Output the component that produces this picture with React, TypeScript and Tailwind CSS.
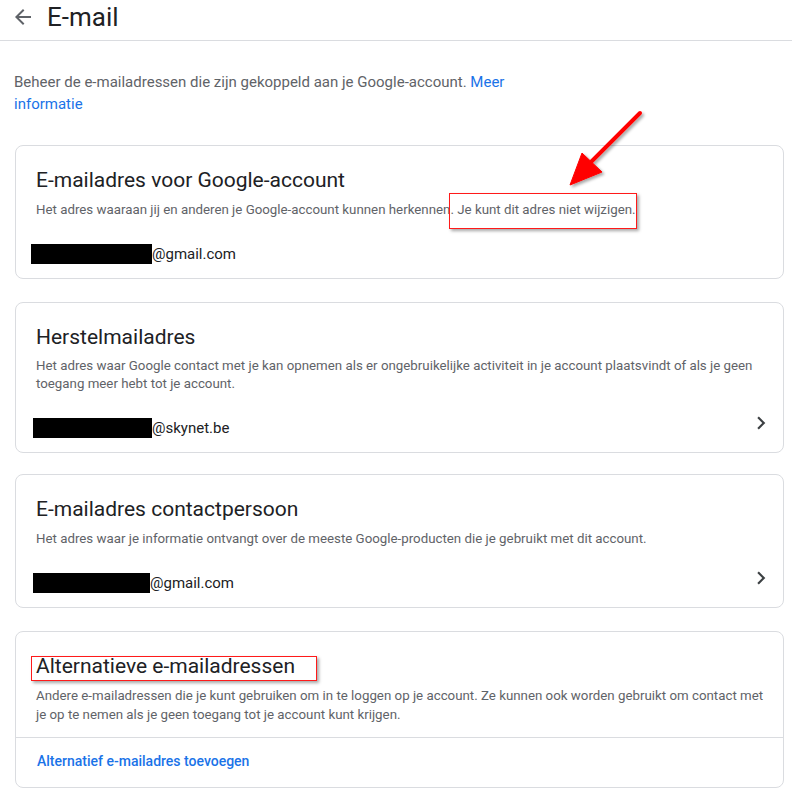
import React from 'react';

// E-mail instellingen (Google-account) met rode markeringen

const FONT = { fontFamily: 'Roboto, "Liberation Sans", Arial, sans-serif' };

function ArrowBack() {
  return (
    <svg width="24" height="24" viewBox="0 0 24 24" className="shrink-0 fill-[#5f6368]">
      <path d="M20 11H7.83l5.59-5.59L12 4l-8 8 8 8 1.41-1.41L7.83 13H20v-2z" />
    </svg>
  );
}

function Chevron() {
  return (
    <svg width="26" height="26" viewBox="0 0 24 24" className="mb-[10px] shrink-0 fill-[#3c4043]">
      <path d="M10 6L8.59 7.41 13.17 12l-4.58 4.59L10 18l6-6z" />
    </svg>
  );
}

/** Zwart blok over het verborgen deel van het adres */
function Redacted({ width, offset }: { width: string; offset: string }) {
  return <span className={`inline-block h-[20px] bg-black ${width} ${offset}`} />;
}

interface CardProps {
  title: string;
  children: React.ReactNode;
  email?: React.ReactNode;
  chevron?: boolean;
  className?: string;
  descLeading?: string;
}

function Card({ title, children, email, chevron, className = '', descLeading = 'leading-[19px]' }: CardProps) {
  return (
    <div className={`rounded-lg border border-[#dadce0] bg-white pl-[20px] pr-[9px] pt-[20px] pb-[12px] ${className}`}>
      <h2 className="text-[21px] leading-[28px] text-[#202124]">{title}</h2>
      <p className={`mt-[6px] pr-[10px] text-[13.3px] text-[#5f6368] ${descLeading}`}>{children}</p>
      {email && (
        <div className="mt-[23px] flex h-[24px] items-center justify-between">
          <div className="flex items-center text-[15px] leading-[24px] text-[#202124]">{email}</div>
          {chevron && <Chevron />}
        </div>
      )}
    </div>
  );
}

export default function App() {
  return (
    <div className="relative min-h-[800px] w-[792px] overflow-hidden bg-white" style={FONT}>
      {/* KOP */}
      <div className="flex h-[41px] items-start border-b border-[#dadce0] pl-[11px]">
        <div className="mt-[1px] flex h-[32px] items-center gap-[12px]">
          <ArrowBack />
          <h1 className="text-[26px] leading-[32px] text-[#202124]">E-mail</h1>
        </div>
      </div>

      <div className="pl-[15px] pr-[8px]">
        <p className="-ml-[1px] mt-[30px] max-w-[520px] text-[15px] leading-[22px] text-[#5f6368]">
          Beheer de e-mailadressen die zijn gekoppeld aan je Google-account.{' '}
          <span className="text-[#1a73e8]">Meer</span>{' '}
          <span className="text-[#1a73e8]">informatie</span>
        </p>

        <div className="mt-[30px] flex flex-col">
          <Card
            title="E-mailadres voor Google-account"
            email={
              <>
                <Redacted width="w-[121px]" offset="-ml-[5px]" />
                <span>@gmail.com</span>
              </>
            }
          >
            Het adres waaraan jij en anderen je Google-account kunnen herkennen. Je kunt dit adres niet wijzigen.
          </Card>

          <Card
            title="Herstelmailadres"
            chevron
            className="mt-[23px]"
            descLeading="leading-[18px]"
            email={
              <>
                <Redacted width="w-[119px]" offset="-ml-[3px]" />
                <span>@skynet.be</span>
              </>
            }
          >
            Het adres waar Google contact met je kan opnemen als er ongebruikelijke activiteit in je account plaatsvindt of als je geen toegang meer hebt tot je account.
          </Card>

          <Card
            title="E-mailadres contactpersoon"
            chevron
            className="mt-[21px]"
            email={
              <>
                <Redacted width="w-[117px]" offset="-ml-[3px]" />
                <span>@gmail.com</span>
              </>
            }
          >
            Het adres waar je informatie ontvangt over de meeste Google-producten die je gebruikt met dit account.
          </Card>

          {/* Alternatieve adressen met scheidingslijn */}
          <div className="mt-[23px] rounded-lg border border-[#dadce0] bg-white">
            <div className="pl-[20px] pr-[8px] pt-[20px] pb-[13px]">
              <h2 className="text-[21px] leading-[28px] text-[#202124]">Alternatieve e-mailadressen</h2>
              <p className="mt-[6px] text-[13.3px] leading-[19px] text-[#5f6368]">
                Andere e-mailadressen die je kunt gebruiken om in te loggen op je account. Ze kunnen ook worden gebruikt om contact met je op te nemen als je geen toegang tot je account kunt krijgen.
              </p>
            </div>
            <div className="border-t border-[#dadce0] pl-[21px] pt-[11px] pb-[14px]">
              <span className="text-[14px] font-medium leading-[19px] text-[#1a73e8]">
                Alternatief e-mailadres toevoegen
              </span>
            </div>
          </div>
        </div>
      </div>

      {/* RODE MARKERINGEN (screenshot-annotaties) */}
      <div className="pointer-events-none absolute left-[449px] top-[193px] h-[36px] w-[188px] border-[1.5px] border-[#ff1a1a] shadow-[2px_2px_3px_rgba(0,0,0,0.35)]" />
      <div className="pointer-events-none absolute left-[31px] top-[656px] h-[25px] w-[286px] border-[1.5px] border-[#ff1a1a] shadow-[2px_2px_3px_rgba(0,0,0,0.35)]" />
      <svg className="pointer-events-none absolute left-[560px] top-[105px]" width="90" height="90" viewBox="0 0 90 90">
        <defs>
          <filter id="sh" x="-20%" y="-20%" width="150%" height="150%">
            <feDropShadow dx="2" dy="2" stdDeviation="1.5" floodColor="#000" floodOpacity="0.35" />
          </filter>
        </defs>
        <g filter="url(#sh)" fill="#ff0000" stroke="#ff0000">
          <line x1="80" y1="8" x2="30" y2="58" strokeWidth="4" strokeLinecap="round" />
          <polygon points="10,80 22,48 42,67" strokeWidth="1" strokeLinejoin="round" />
        </g>
      </svg>
    </div>
  );
}
